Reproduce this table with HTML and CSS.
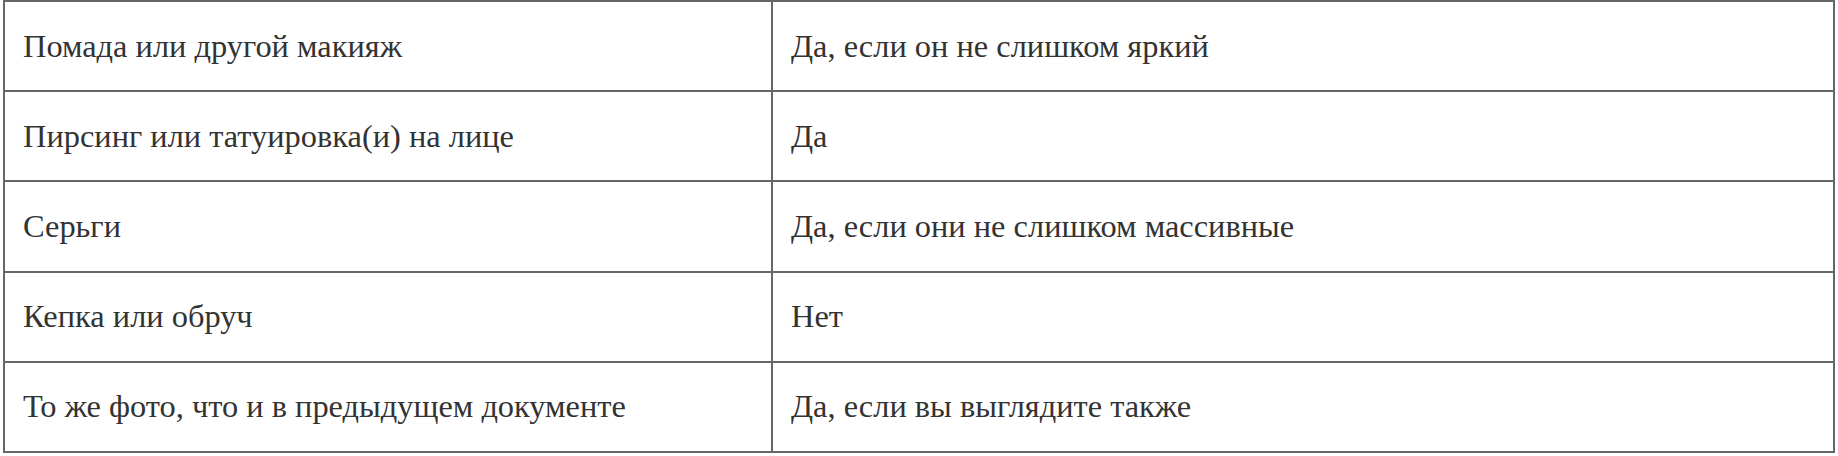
FILE: index.html
```html
<!DOCTYPE html>
<html lang="ru">
<head>
<meta charset="utf-8">
<title>Таблица</title>
<link rel="stylesheet" href="styles.css">
</head>
<body>
<table class="rules">
  <tbody>
    <tr><td class="c1">Помада или другой макияж</td><td class="c2">Да, если он не слишком яркий</td></tr>
    <tr><td class="c1">Пирсинг или татуировка(и) на лице</td><td class="c2">Да</td></tr>
    <tr><td class="c1">Серьги</td><td class="c2">Да, если они не слишком массивные</td></tr>
    <tr><td class="c1">Кепка или обруч</td><td class="c2">Нет</td></tr>
    <tr><td class="c1">То же фото, что и в предыдущем документе</td><td class="c2">Да, если вы выглядите также</td></tr>
  </tbody>
</table>
</body>
</html>
```
FILE: styles.css
```css
html, body {
  margin: 0;
  padding: 0;
  background: #ffffff;
}
body {
  padding: 0 0 0 3px;
  font-family: "Liberation Serif", "Times New Roman", serif;
  color: #333333;
}
.rules {
  border-collapse: collapse;
  width: 1832px;
  height: 453px;
  table-layout: fixed;
}
.rules td {
  border: 2px solid #666666;
  font-size: 32.4px;
  line-height: 1.2;
  padding: 0 18px;
  vertical-align: middle;
  height: 88px;
}
.rules .c1 {
  width: 730px;
}
```
